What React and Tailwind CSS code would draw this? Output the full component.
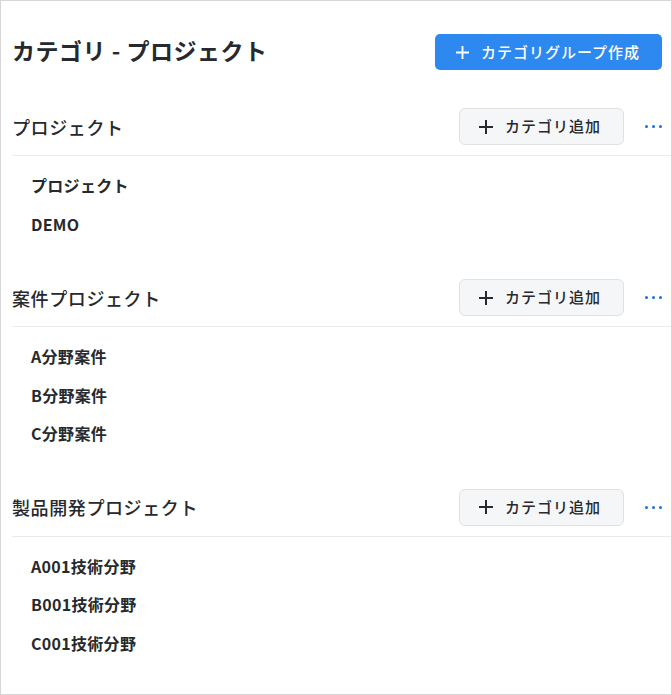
import React from 'react';

const groups = [
  { name: 'プロジェクト', items: ['プロジェクト', 'DEMO'] },
  { name: '案件プロジェクト', items: ['A分野案件', 'B分野案件', 'C分野案件'] },
  { name: '製品開発プロジェクト', items: ['A001技術分野', 'B001技術分野', 'C001技術分野'] },
];

function Plus({ className }) {
  return (
    <svg viewBox="0 0 14 14" className={className} fill="none" stroke="currentColor" strokeWidth="2" strokeLinecap="butt">
      <path d="M7 0v14M0 7h14" />
    </svg>
  );
}

function Dots() {
  return (
    <div className="flex items-center gap-[4px]">
      <span className="block h-[3px] w-[3px] rounded-full bg-[#1d6fe0]" />
      <span className="block h-[3px] w-[3px] rounded-full bg-[#1d6fe0]" />
      <span className="block h-[3px] w-[3px] rounded-full bg-[#1d6fe0]" />
    </div>
  );
}

export default function App() {
  return (
    <div
      className="h-[695px] w-[672px] overflow-hidden border border-[#d6d6d6] bg-white text-[#26292d]"
      style={{ fontFamily: '"Noto Sans CJK JP", "Noto Sans", sans-serif' }}
    >
      <div className="pl-[11px] pt-[33px]">
        {/* header */}
        <div className="flex h-[36px] items-center justify-between pr-[9px]">
          <h1 className="mb-[4px] text-[23px] font-bold leading-none tracking-[0.5px]">カテゴリ - プロジェクト</h1>
          <button className="flex h-[36px] w-[227px] items-center gap-[12px] rounded-[5px] bg-[#2d89ef] pl-[21px] text-[15px] font-medium text-white">
            <Plus className="h-[13px] w-[13px]" />
            <span className="tracking-[1px]">カテゴリグループ作成</span>
          </button>
        </div>

        {groups.map((g, i) => (
          <div key={g.name} className={i === 0 ? 'mt-[38px]' : 'mt-[36px]'}>
            <div className="flex items-center justify-between border-b border-[#ebebeb] pb-[10px] pr-[9px]">
              <h2 className="text-[18px] font-medium leading-none tracking-[0.6px]">{g.name}</h2>
              <div className="flex items-center gap-[21px]">
                <button className="flex h-[37px] w-[165px] items-center gap-[12px] rounded-[6px] border border-[#dfe1e5] bg-[#f5f6f8] pl-[19px] text-[15px] font-medium text-[#26292d]">
                  <Plus className="h-[14px] w-[14px]" />
                  <span className="tracking-[1px]">カテゴリ追加</span>
                </button>
                <Dots />
              </div>
            </div>
            <div className="pl-[19px] pt-[10px]">
              {g.items.map((it) => (
                <div key={it} className="flex h-[38.5px] items-center text-[16px] font-semibold tracking-[0.3px]">
                  {it}
                </div>
              ))}
            </div>
          </div>
        ))}
      </div>
    </div>
  );
}
